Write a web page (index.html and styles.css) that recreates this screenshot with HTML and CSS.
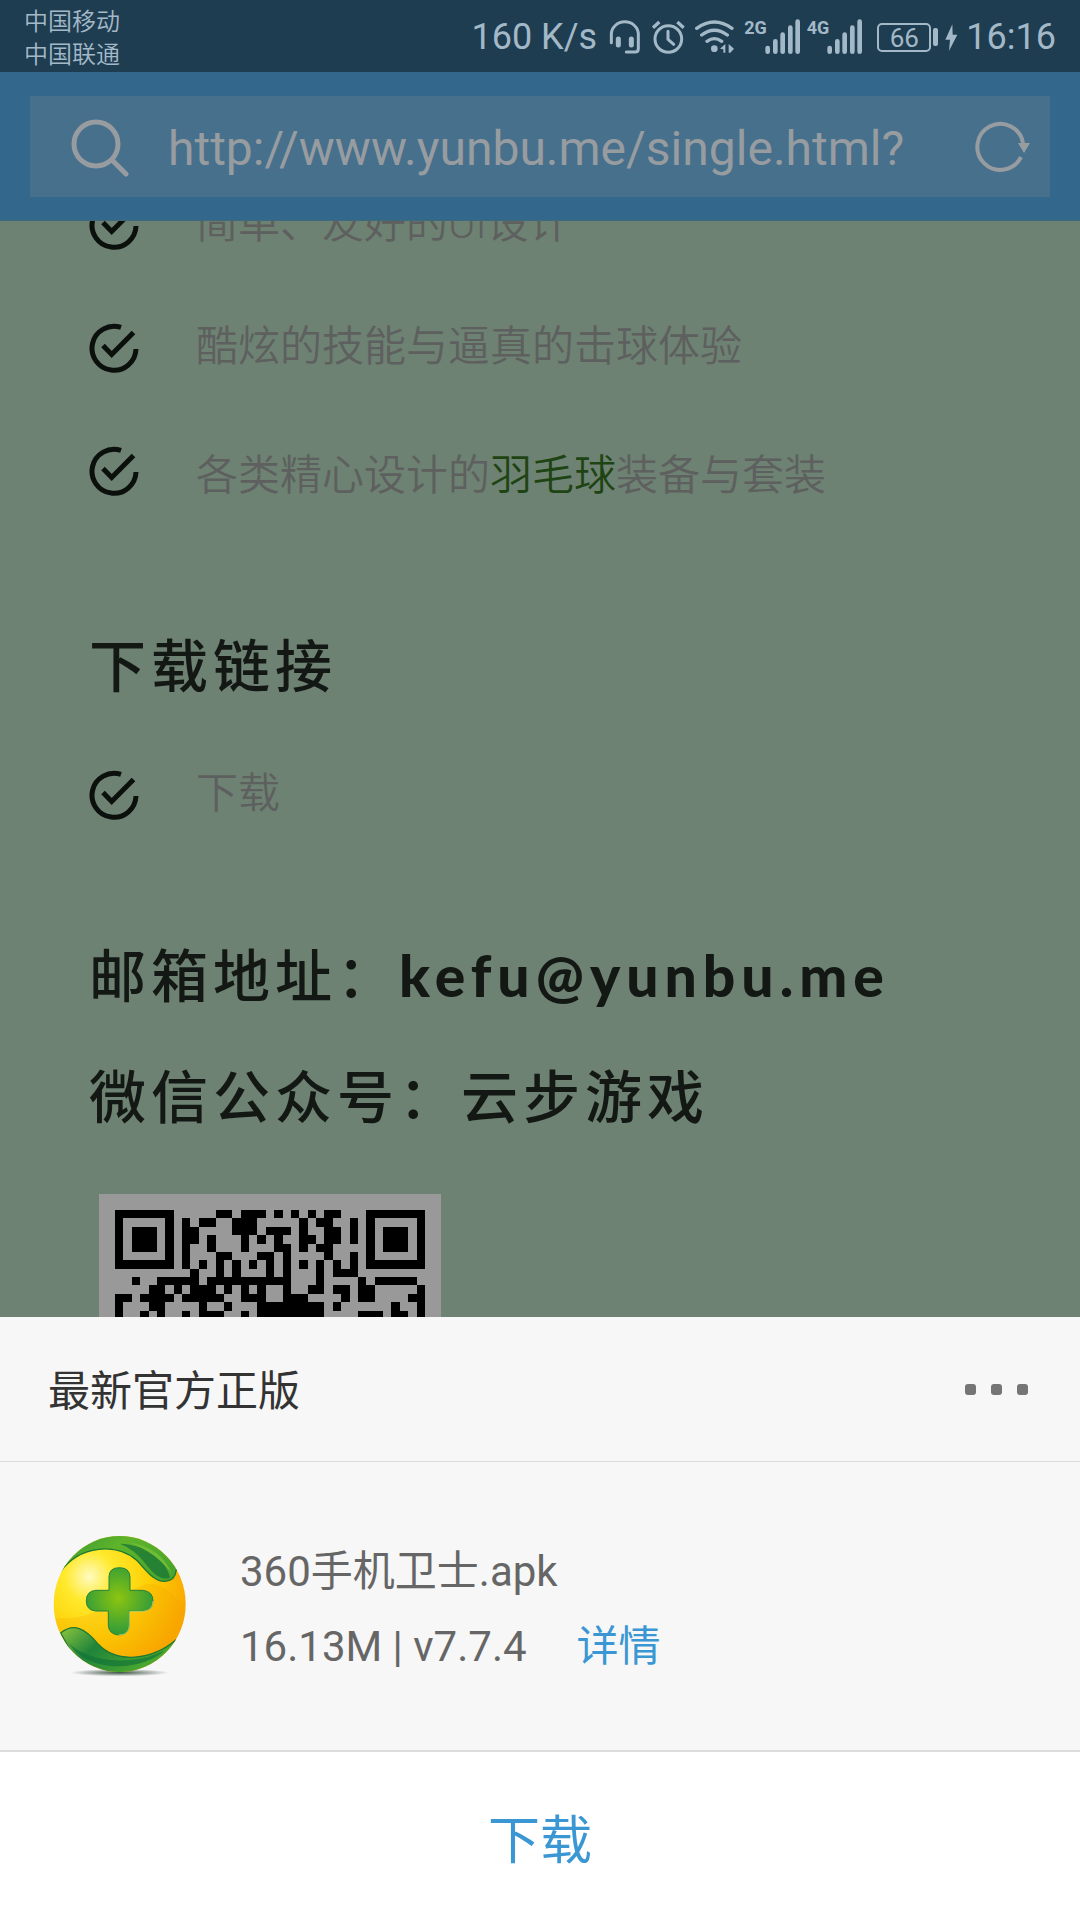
FILE: index.html
```html
<!DOCTYPE html>
<html lang="zh-CN">
<head>
<meta charset="utf-8">
<meta name="viewport" content="width=device-width, initial-scale=1">
<title>云步游戏</title>
<link rel="stylesheet" href="styles.css">
</head>
<body>
<svg class="defs" aria-hidden="true">
  <symbol id="check" viewBox="0 0 50 50">
    <path d="M32 4.400A22 22 0 1 0 47 26M14 22.500L22.700 31.500L44.500 9.500" fill="none" stroke="#0b100d" stroke-width="5"/>
  </symbol>
  <symbol id="bars" viewBox="0 0 108 108">
    <path d="M8 98V87M31 98V67M53 98V47M76 98V26M98 98V8" fill="none" stroke="currentColor" stroke-width="14" stroke-linecap="round"/>
  </symbol>
</svg>

<header class="status">
  <div class="carriers"><span>中国移动</span><span>中国联通</span></div>
  <div class="indicators">
    <span class="speed">160 K/s</span>
    <svg width="36" height="36" viewBox="444 55 108 108" fill="none" stroke="currentColor" stroke-width="9" stroke-linecap="round">
      <path d="M451 126V101A40 37 0 0 1 532 101V144Q532 154 522 154H496"/>
      <path d="M472 115V133M511 115V133" stroke-width="15"/>
    </svg>
    <svg width="37" height="36" viewBox="570 55 111 108" fill="none" stroke="currentColor" stroke-width="9">
      <circle cx="622" cy="115" r="40"/>
      <path d="M621 92V116L638 131" stroke-linecap="round"/>
      <path d="M576 81L595 64M649 64L668 81" stroke-width="10"/>
    </svg>
    <svg width="44" height="36" viewBox="699 55 132 108" fill="none" stroke="currentColor" stroke-width="10" stroke-linecap="round">
      <path d="M707 83Q760 45 813 83M722 103Q760 74 799 103M738 122Q760 106 782 122"/>
      <circle cx="760" cy="144" r="10" fill="currentColor" stroke="none"/>
      <path d="M777 144L793 130V156H787V146ZM803 130L819 144L808 156H803Z" fill="currentColor" stroke="none"/>
    </svg>
    <span class="signal"><small>2G</small><svg width="36" height="36"><use href="#bars"/></svg></span>
    <span class="signal"><small>4G</small><svg width="36" height="36"><use href="#bars"/></svg></span>
    <span class="battery"><b>66</b><i></i></span>
    <svg width="16" height="36" viewBox="612 55 48 108" fill="currentColor"><path d="M637 71L616 117H630L627 151L652 102H638Z"/></svg>
    <time>16:16</time>
  </div>
</header>

<form class="bar">
  <div class="address">
    <svg width="60" height="60" viewBox="0 0 60 60" fill="none" stroke="#979ca0" stroke-width="5" stroke-linecap="round"><circle cx="26" cy="27" r="22"/><path d="M42 43L56 57"/></svg>
    <input type="text" aria-label="网址" value="http://www.yunbu.me/single.html?">
    <button type="button" class="reload" aria-label="刷新">
      <svg width="56" height="56" viewBox="0 0 56 56"><path d="M49 24A23 23 0 1 0 47 38" fill="none" stroke="#979ca0" stroke-width="4"/><path d="M44 24H56L50 34Z" fill="#979ca0"/></svg>
    </button>
  </div>
</form>

<main class="page">
  <ul class="features">
    <li><svg width="50" height="50"><use href="#check"/></svg><span>简单、友好的UI设计</span></li>
    <li><svg width="50" height="50"><use href="#check"/></svg><span>酷炫的技能与逼真的击球体验</span></li>
    <li class="linked"><svg width="50" height="50"><use href="#check"/></svg><span>各类精心设计的<a href="#badminton">羽毛球</a>装备与套装</span></li>
  </ul>
  <h2>下载链接</h2>
  <ul class="features downloads">
    <li><svg width="50" height="50"><use href="#check"/></svg><span>下载</span></li>
  </ul>
  <h2>邮箱地址：<span class="mail">kefu@yunbu.me</span></h2>
  <h2 class="wechat">微信公众号：云步游戏</h2>
  <div class="qr">
    <svg id="qr" width="310" height="310" viewBox="0 0 37 37" shape-rendering="crispEdges" role="img" aria-label="二维码">
      <path fill-rule="evenodd" d="M0 0h7v7h-7zM1 1v5h5v-5zM2 2h3v3h-3zM30 0h7v7h-7zM31 1v5h5v-5zM32 2h3v3h-3z"/>
      <path d="M12 0h2v1h-2zM15 0h3v1h-3zM19 0h1v1h-1zM21 0h1v1h-1zM23 0h1v1h-1zM25 0h2v1h-2z
M8 1h1v1h-1zM10 1h2v1h-2zM14 1h3v1h-3zM22 1h1v1h-1zM24 1h2v1h-2zM28 1h1v1h-1z
M8 2h2v1h-2zM14 2h3v1h-3zM18 2h3v1h-3zM22 2h1v1h-1zM25 2h2v1h-2zM28 2h1v1h-1z
M8 3h2v1h-2zM11 3h1v1h-1zM15 3h1v1h-1zM17 3h1v1h-1zM19 3h1v1h-1zM22 3h2v1h-2zM25 3h2v1h-2zM28 3h1v1h-1z
M8 4h1v1h-1zM11 4h1v1h-1zM15 4h1v1h-1zM19 4h2v1h-2zM22 4h1v1h-1zM24 4h2v1h-2z
M8 5h1v1h-1zM12 5h2v1h-2zM17 5h2v1h-2zM20 5h1v1h-1zM25 5h1v1h-1zM28 5h1v1h-1z
M8 6h1v1h-1zM10 6h1v1h-1zM12 6h1v1h-1zM14 6h1v1h-1zM16 6h1v1h-1zM18 6h1v1h-1zM20 6h1v1h-1zM22 6h1v1h-1zM24 6h1v1h-1zM26 6h1v1h-1zM28 6h1v1h-1z
M9 7h1v1h-1zM12 7h1v1h-1zM14 7h1v1h-1zM18 7h1v1h-1zM20 7h1v1h-1zM24 7h1v1h-1zM26 7h3v1h-3z
M2 8h1v1h-1zM5 8h5v1h-5zM11 8h10v1h-10zM24 8h1v1h-1zM29 8h1v1h-1zM31 8h5v1h-5z
M4 9h2v1h-2zM7 9h1v1h-1zM9 9h3v1h-3zM13 9h1v1h-1zM15 9h1v1h-1zM17 9h1v1h-1zM20 9h1v1h-1zM23 9h2v1h-2zM26 9h2v1h-2zM29 9h2v1h-2zM36 9h1v1h-1z
M0 10h2v1h-2zM3 10h4v1h-4zM8 10h5v1h-5zM15 10h3v1h-3zM20 10h3v1h-3zM27 10h1v1h-1zM29 10h2v1h-2zM35 10h2v1h-2z
M0 11h1v1h-1zM4 11h2v1h-2zM10 11h1v1h-1zM13 11h1v1h-1zM17 11h8v1h-8zM26 11h1v1h-1zM33 11h1v1h-1zM36 11h1v1h-1z
M0 12h1v1h-1zM3 12h1v1h-1zM5 12h1v1h-1zM8 12h1v1h-1zM10 12h3v1h-3zM15 12h1v1h-1zM17 12h8v1h-8zM29 12h3v1h-3zM33 12h2v1h-2zM36 12h1v1h-1z"/>
    </svg>
  </div>
</main>

<section class="sheet">
  <div class="sheet-head">
    <h3>最新官方正版</h3>
    <button type="button" class="more" aria-label="更多"><i></i><i></i><i></i></button>
  </div>
  <div class="app">
    <svg width="142" height="146" viewBox="54 66 426 438" aria-hidden="true">
      <defs>
        <radialGradient id="ball" cx=".27" cy=".3" r=".75"><stop offset="0" stop-color="#fffbc0"/><stop offset=".25" stop-color="#ffe92c"/><stop offset=".6" stop-color="#fdcf05"/><stop offset="1" stop-color="#f9a800"/></radialGradient>
        <linearGradient id="top" x1="0" y1="0" x2="1" y2=".5"><stop offset="0" stop-color="#2f9132"/><stop offset=".5" stop-color="#5fb42b"/><stop offset="1" stop-color="#4ba52e"/></linearGradient>
        <linearGradient id="low" x1="0" y1="0" x2="1" y2=".5"><stop offset="0" stop-color="#8cc63f"/><stop offset=".4" stop-color="#20843a"/><stop offset="1" stop-color="#52ad2c"/></linearGradient>
        <radialGradient id="plus" cx=".48" cy=".45" r=".55"><stop offset="0" stop-color="#8cc510"/><stop offset="1" stop-color="#2f9a3a"/></radialGradient>
        <radialGradient id="shade"><stop offset="0" stop-color="#3f5548"/><stop offset="1" stop-color="#3f5548" stop-opacity="0"/></radialGradient>
        <clipPath id="round"><ellipse cx="269" cy="279" rx="198" ry="204"/></clipPath>
      </defs>
      <ellipse cx="269" cy="485" rx="148" ry="11" fill="url(#shade)"/>
      <g clip-path="url(#round)">
        <rect x="70" y="74" width="400" height="410" fill="url(#ball)"/>
        <path d="M70 320C230 340 300 200 380 220Q430 240 470 300V484H70Z" fill="#f59b00" opacity=".2"/>
        <path d="M90 184C150 100 262 96 320 148C350 178 370 212 405 211Q436 208 438 180L470 60H70Z" fill="url(#top)" stroke="#1c7a32" stroke-width="4"/>
        <path d="M270 98C350 100 410 150 420 200C392 210 372 190 345 157Q315 116 270 98Z" fill="#147136" opacity=".7"/>
        <path d="M290 92Q395 108 426 190C400 150 355 114 290 92Z" fill="#6fbd35"/>
        <path d="M92 366C130 335 165 350 205 400C260 458 365 450 440 385L400 490H160Z" fill="url(#low)" stroke="#1c7a32" stroke-width="4"/>
        <path d="M105 385C140 430 220 455 300 447Q350 445 405 418C350 470 220 490 140 425Z" fill="#0f7139" opacity=".65"/>
      </g>
      <path d="M237 198Q237 170 268 170Q299 170 300 198V238H340Q369 242 369 270Q369 298 340 300H298V342Q297 372 266 372Q236 370 235 342V300H197Q169 298 169 270Q169 240 197 238H237Z" fill="url(#plus)" stroke="#25833a" stroke-width="3"/>
      <path d="M300 301H340Q369 298 369 270M298 301V342Q297 372 266 372" fill="none" stroke="#d8ed80" stroke-width="2"/>
    </svg>
    <div class="info">
      <p>360手机卫士.apk</p>
      <p>16.13M | v7.7.4<a href="#detail">详情</a></p>
    </div>
  </div>
  <button type="button" class="download">下载</button>
</section>
</body>
</html>
```

FILE: styles.css
```css
* { box-sizing: border-box; }

body {
  margin: 0;
  height: 100vh;
  display: flex;
  flex-direction: column;
  background: #6d8272;
  font-family: Roboto, "Noto Sans CJK SC", sans-serif;
}

h2, h3, p, ul { margin: 0; padding: 0; font-weight: 400; }
a { text-decoration: none; }
button { margin: 0; padding: 0; border: 0; background: none; font: inherit; }
svg { display: block; flex: none; }
.defs { position: absolute; width: 0; height: 0; }

/* Status bar */
.status {
  flex: none;
  height: 72px;
  display: flex;
  justify-content: space-between;
  padding: 2px 24px 0;
  background: #1f3d51;
  color: #a3b9c8;
}
.carriers {
  display: flex;
  flex-direction: column;
  justify-content: center;
  padding-top: 4px;
  font-size: 24px;
  line-height: 33px;
  font-weight: 350;
}
.indicators { display: flex; align-items: center; gap: 6px; font-size: 36px; }
.speed { margin-right: 6px; }
.signal { display: flex; align-items: flex-start; }
.signal small { margin-right: -2px; font: 700 18px/18px Roboto, sans-serif; }
.battery { display: flex; align-items: center; gap: 2px; margin-left: 8px; }
.battery b {
  width: 54px;
  height: 29px;
  border: 2px solid #a3b9c8;
  border-radius: 5px;
  font-weight: 400;
  font-size: 26px;
  line-height: 26px;
  text-align: center;
}
.battery i { width: 5px; height: 18px; border-radius: 2px; background: #a3b9c8; }

/* Address bar */
.bar { flex: none; padding: 24px 30px 23px; background: #33678b; border-bottom: 1px solid #3f6a78; }
.address {
  display: flex;
  align-items: center;
  height: 101px;
  padding: 0 20px 0 40px;
  background: #47708c;
}
.address input {
  flex: 1;
  min-width: 0;
  margin-left: 38px;
  padding: 4px 0 0;
  border: 0;
  outline: 0;
  background: none;
  color: #979ca0;
  font: 400 48px/60px Roboto, sans-serif;
}

/* Web page under the sheet */
.page { flex: 1; min-height: 0; overflow: hidden; padding: 0 89px; }
.features { list-style: none; margin-top: -21px; }
.features li {
  display: flex;
  gap: 57px;
  height: 50px;
  margin-bottom: 73px;
  color: #5e5f5f;
  font-size: 42px;
  line-height: 48px;
  font-weight: 350;
}
.features .linked { line-height: 59px; }
.features a { color: #1f4414; }
.page h2 {
  color: #141815;
  font: 500 57px/80px "Noto Sans CJK SC", sans-serif;
  letter-spacing: 5px;
}
.page .features + h2 { margin-top: 126px; }
.page .downloads { margin-top: 68px; }
.page .downloads + h2 { margin-top: 112px; }
.page .wechat { margin-top: 38px; }
.mail { font-family: Lato, sans-serif; font-weight: 900; letter-spacing: 6px; }
.qr { width: 342px; height: 342px; margin: 61px 10px 0; padding: 16px; background: #999; }

/* Download sheet */
.sheet { flex: none; background: #f7f7f7; color: #333; }
.sheet-head {
  display: flex;
  justify-content: space-between;
  align-items: center;
  height: 145px;
  padding: 0 52px 0 48px;
  border-bottom: 1px solid #dcdcdc;
}
.sheet-head h3 { padding-top: 6px; font-size: 42px; line-height: 60px; }
.more { display: flex; gap: 15px; }
.more i { width: 11px; height: 11px; border-radius: 3px; background: #757575; }
.app {
  display: flex;
  align-items: center;
  gap: 50px;
  height: 290px;
  padding: 0 48px;
  border-bottom: 2px solid #dcdcdc;
}
.info { padding-top: 6px; color: #666; font-size: 42px; line-height: 75px; }
.info a { margin-left: 50px; color: #3b97d3; }
.download {
  display: block;
  width: 100%;
  height: 168px;
  background: #fff;
  color: #3b97d3;
  font-size: 52px;
}
```
